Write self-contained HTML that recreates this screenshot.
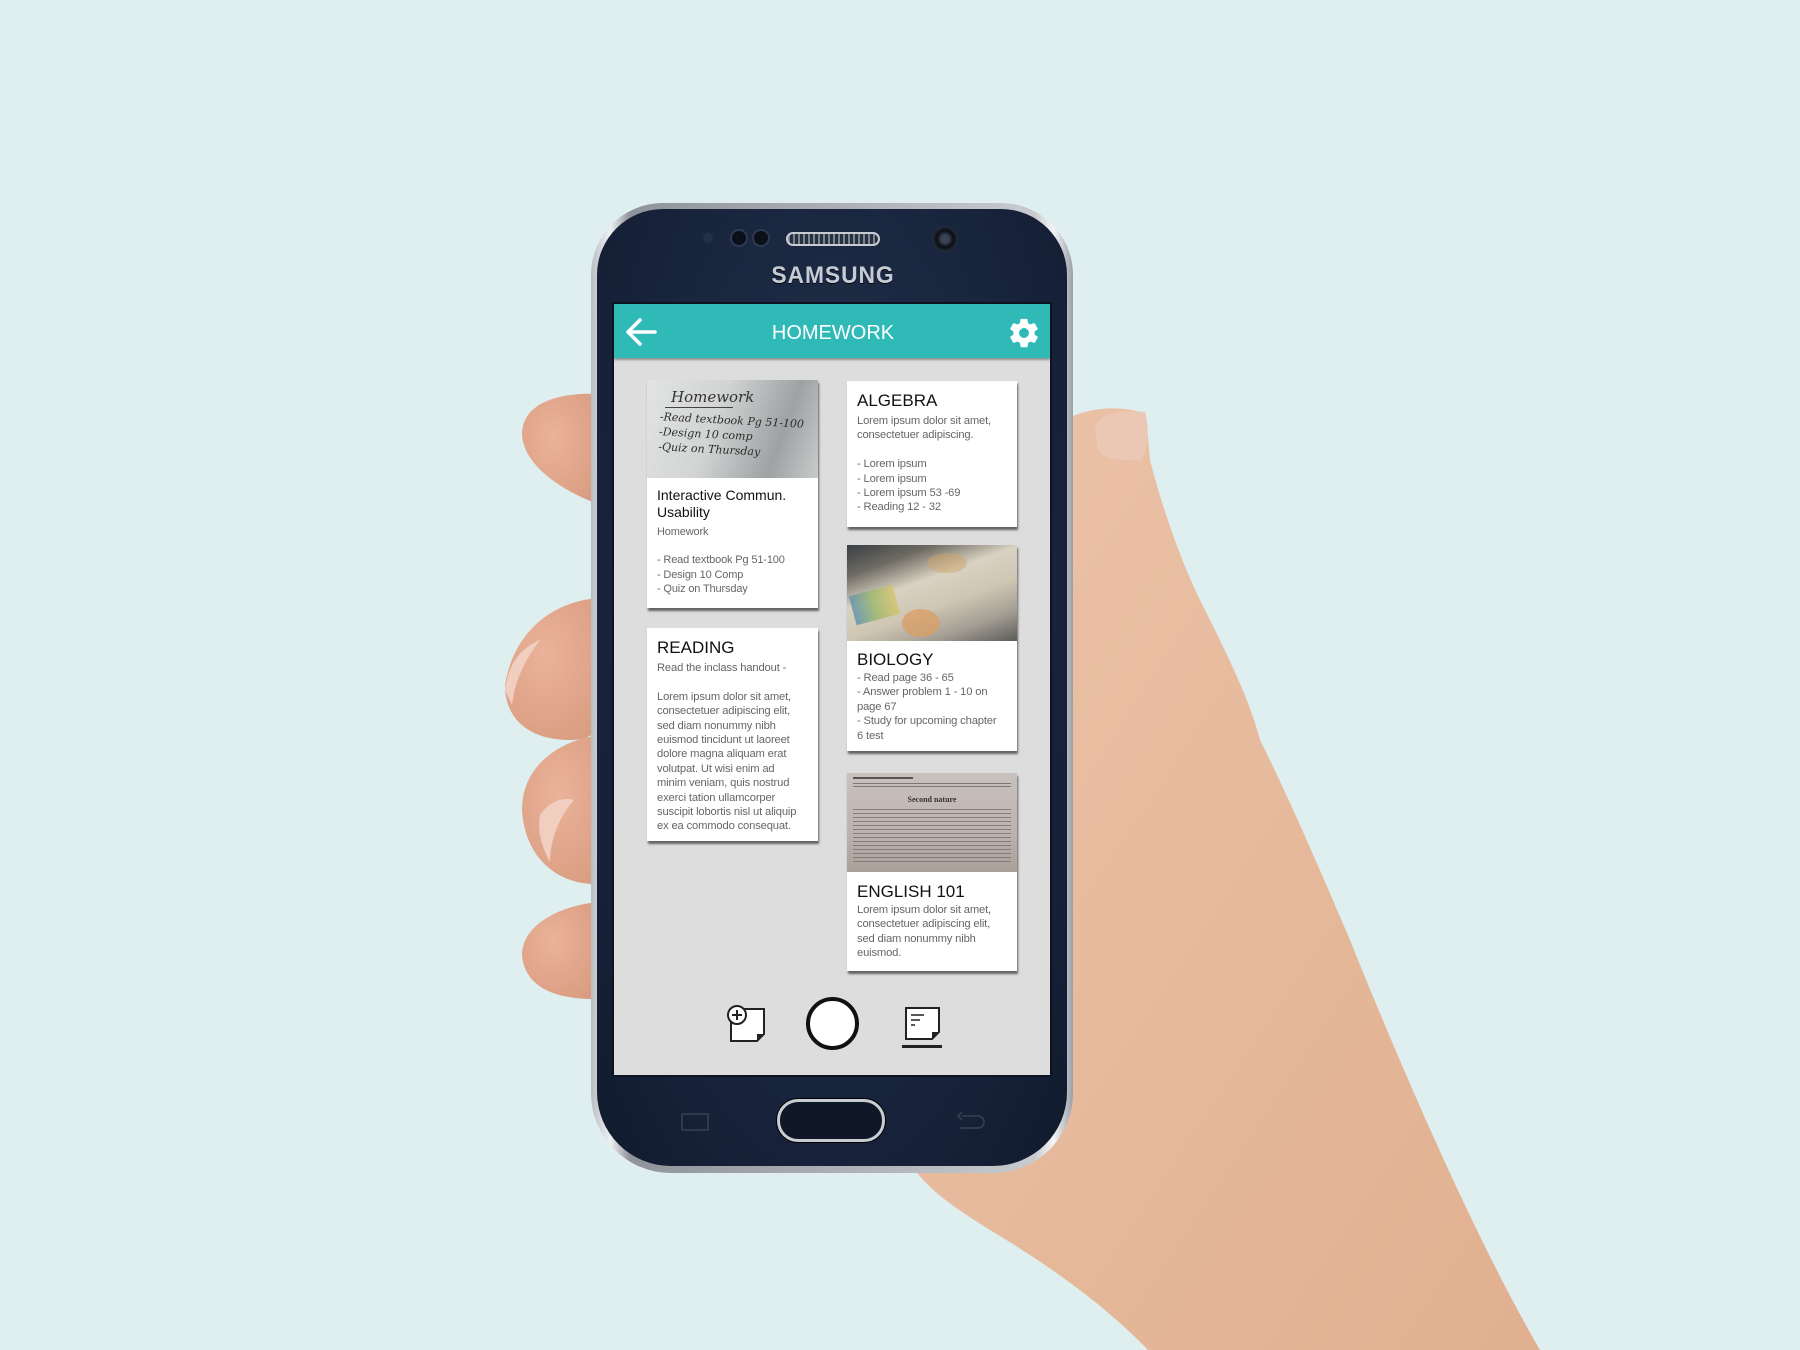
<!DOCTYPE html>
<html><head><meta charset="utf-8"><style>
*{margin:0;padding:0;box-sizing:border-box}
body{width:1800px;height:1350px;overflow:hidden;background:#dfeeef;position:relative;font-family:"Liberation Sans",sans-serif}
.abs{position:absolute}
.card{position:absolute;background:#fff;box-shadow:1px 3px 2px rgba(0,0,0,.55);overflow:hidden}
.card .in{padding:10px 9px 0 10px}
.t{font-size:17px;color:#111;line-height:20px}
.b{font-size:11.2px;color:#666;line-height:14.4px;letter-spacing:-0.15px;white-space:nowrap}
.img{position:relative;overflow:hidden}
</style></head><body>
<svg class="abs" style="left:0;top:0" width="1800" height="1350">
 <defs>
  <linearGradient id="sk" x1="0" y1="0" x2="1" y2="1"><stop offset="0" stop-color="#ecc3a8"/><stop offset="1" stop-color="#e0b090"/></linearGradient>
  <radialGradient id="fg" cx="0.4" cy="0.4" r="0.7"><stop offset="0" stop-color="#eab39a"/><stop offset="1" stop-color="#d99c80"/></radialGradient>
 </defs>
 <path d="M1060,425 C1080,405 1130,405 1146,415 L1150,460 C1160,500 1180,560 1200,600 C1225,650 1250,700 1260,740 C1290,800 1320,870 1350,940 C1390,1040 1470,1230 1540,1350 L1148,1350 C1100,1300 1040,1260 990,1230 C950,1205 930,1190 915,1170 Z" fill="url(#sk)"/>
 <path d="M1095,430 C1095,415 1115,410 1145,412 C1150,430 1148,455 1140,460 C1120,462 1100,458 1098,448 Z" fill="#ebc8b6"/>
 <path d="M600,394 C560,392 522,402 522,435 C524,465 560,490 600,505 Z" fill="url(#fg)"/>
 <path d="M600,598 C560,600 515,625 505,685 C505,720 530,740 570,740 C600,740 608,720 608,690 Z" fill="url(#fg)"/>
 <path d="M505,690 C508,665 520,648 540,640 C525,660 515,680 512,705 Z" fill="#f1cfc0"/>
 <path d="M600,735 C560,740 522,765 522,810 C525,860 560,886 600,884 C615,870 620,820 600,735 Z" fill="url(#fg)"/>
 <path d="M540,815 C550,800 565,797 574,800 C560,815 550,840 550,862 C542,848 537,830 540,815 Z" fill="#f1cfc0"/>
 <path d="M600,902 C560,905 522,925 522,955 C525,990 560,1000 600,999 Z" fill="url(#fg)"/>
</svg>

<div class="abs" style="left:591px;top:203px;width:482px;height:970px;border-radius:72px 72px 80px 80px;background:linear-gradient(90deg,#b9bcc2,#eef0f2 4%,#8f939a 8%,#c7cace 92%,#f4f5f6 96%,#9aa0a8);"></div>
<div class="abs" style="left:597px;top:209px;width:470px;height:957px;border-radius:66px 66px 74px 74px;background:radial-gradient(ellipse at 50% 40%,#22324c,#17223a 70%,#111a2c);"></div>
<div class="abs" style="left:703px;top:233px;width:10px;height:10px;border-radius:50%;background:#233048"></div>
<div class="abs" style="left:732px;top:231px;width:14px;height:14px;border-radius:50%;background:#0b0f18;box-shadow:0 0 0 2px #2d3a52"></div>
<div class="abs" style="left:754px;top:231px;width:14px;height:14px;border-radius:50%;background:#0b0f18;box-shadow:0 0 0 2px #2d3a52"></div>
<div class="abs" style="left:786px;top:232px;width:94px;height:14px;border-radius:8px;background:repeating-linear-gradient(90deg,#7c8594 0 2px,#28303f 2px 5px);border:2px solid #c9cdd3"></div>
<div class="abs" style="left:932px;top:226px;width:26px;height:26px;border-radius:50%;background:radial-gradient(circle,#3a4455 20%,#0a0d14 45%,#262e3c 70%,#4a5262);"></div>
<div class="abs" style="left:733px;top:262px;width:200px;text-align:center;font-size:24px;font-weight:bold;letter-spacing:1px;color:#c6ccd6;text-shadow:0 1px 0 #000;transform:scaleX(0.95)">SAMSUNG</div>

<div class="abs" style="left:614px;top:304px;width:436px;height:771px;background:#dddddd;box-shadow:0 0 0 2px #0d1320"></div>
<div class="abs" style="left:614px;top:304px;width:436px;height:54px;background:#2fbab7;box-shadow:0 2px 2px rgba(0,0,0,.35)"></div>
<svg class="abs" style="left:624px;top:316px" width="36" height="32" viewBox="0 0 36 32"><path d="M31,16 H5 M16,4 L4,16 L16,28" stroke="#fff" stroke-width="3.5" fill="none" stroke-linecap="round" stroke-linejoin="round"/></svg>
<div class="abs" style="left:713px;top:322px;width:240px;text-align:center;color:#fff;font-size:20px">HOMEWORK</div>
<svg class="abs" style="left:1007px;top:316px" width="34" height="34" viewBox="0 0 24 24"><path fill="#fff" d="M19.4 13c.04-.3.06-.65.06-1s-.02-.7-.07-1l2.1-1.650c.2-.15.24-.42.12-.64l-2-3.46c-.12-.22-.4-.3-.6-.22l-2.5 1c-.52-.4-1.08-.73-1.7-.98l-.37-2.65A.5.5 0 0 0 14 2h-4a.5.5 0 0 0-.5.42l-.37 2.65c-.6.25-1.17.58-1.7.98l-2.5-1a.5.5 0 0 0-.6.22l-2 3.46c-.13.22-.07.5.12.64L4.57 11c-.04.3-.07.66-.07 1s.03.7.07 1l-2.1 1.65c-.2.15-.25.42-.12.64l2 3.46c.12.22.4.3.6.22l2.5-1c.52.4 1.08.73 1.7.98l.37 2.65c.04.24.25.42.5.42h4c.25 0 .46-.18.5-.42l.37-2.65c.6-.25 1.17-.57 1.7-.98l2.5 1c.23.08.48 0 .6-.22l2-3.46c.13-.22.07-.5-.12-.64L19.4 13zM12 15.5A3.5 3.5 0 1 1 12 8.5a3.5 3.5 0 0 1 0 7z"/></svg>

<div class="card" style="left:647px;top:380px;width:171px;height:228px">
 <div class="img" style="height:98px;background:linear-gradient(110deg,#e2e3e3 0%,#d2d4d4 40%,#9ea2a3 75%,#c9cbcb 100%)">
  <div class="abs" style="left:24px;top:8px;font-family:'DejaVu Serif',serif;font-style:italic;font-size:15px;color:#333">Homework</div>
  <div class="abs" style="left:18px;top:27px;width:68px;height:1px;background:#444"></div>
  <div class="abs" style="left:12px;top:33px;font-family:'DejaVu Serif',serif;font-style:italic;font-size:11px;line-height:15px;color:#2b2b2b;transform:rotate(3deg)">-Read textbook Pg 51-100<br>-Design 10 comp<br>-Quiz on Thursday</div>
 </div>
 <div class="in" style="padding-top:9px">
  <div class="t" style="font-size:14px;line-height:17px">Interactive Commun.<br>Usability</div>
  <div class="b" style="margin-top:4px;font-size:11px">Homework</div>
  <div class="b" style="margin-top:14px;font-size:11px">- Read textbook Pg 51-100<br>- Design 10 Comp<br>- Quiz on Thursday</div>
 </div>
</div>

<div class="card" style="left:847px;top:381px;width:170px;height:146px">
 <div class="in"><div class="t">ALGEBRA</div>
 <div class="b" style="margin-top:3px">Lorem ipsum dolor sit amet,<br>consectetuer adipiscing.<br><br>- Lorem ipsum<br>- Lorem ipsum<br>- Lorem ipsum 53 -69<br>- Reading 12 - 32</div></div>
</div>

<div class="card" style="left:847px;top:545px;width:170px;height:206px">
 <div class="img" style="height:96px;background:linear-gradient(160deg,#3a3f42 0%,#6d6a62 20%,#d9d2c2 40%,#cfc6b3 60%,#a39e94 80%,#5c5b58 100%)">
  <div class="abs" style="left:5px;top:45px;width:45px;height:30px;background:linear-gradient(90deg,#5a8fb0,#9bb86a,#d7c46c);transform:rotate(-15deg);opacity:.8"></div>
  <div class="abs" style="left:55px;top:64px;width:38px;height:28px;border-radius:50%;background:#d8a066;opacity:.8"></div>
  <div class="abs" style="left:80px;top:8px;width:40px;height:20px;border-radius:50%;background:#cda36a;opacity:.5"></div>
 </div>
 <div class="in" style="padding-top:9px"><div class="t">BIOLOGY</div>
 <div class="b" style="margin-top:1px">- Read page 36 - 65<br>- Answer problem 1 - 10 on<br>page 67<br>- Study for upcoming chapter<br>6 test</div></div>
</div>

<div class="card" style="left:647px;top:628px;width:171px;height:213px">
 <div class="in"><div class="t">READING</div>
 <div class="b" style="margin-top:3px">Read the inclass handout -<br><br>Lorem ipsum dolor sit amet,<br>consectetuer adipiscing elit,<br>sed diam nonummy nibh<br>euismod tincidunt ut laoreet<br>dolore magna aliquam erat<br>volutpat. Ut wisi enim ad<br>minim veniam, quis nostrud<br>exerci tation ullamcorper<br>suscipit lobortis nisl ut aliquip<br>ex ea commodo consequat.</div></div>
</div>

<div class="card" style="left:847px;top:773px;width:170px;height:198px">
 <div class="img" style="height:99px;background:linear-gradient(180deg,#c9c1bd,#bdb3ae 60%,#a9a09a)">
  <div class="abs" style="left:0;top:22px;width:170px;text-align:center;font-family:'Liberation Serif',serif;font-weight:bold;font-size:8px;color:#333">Second nature</div>
  <div class="abs" style="left:6px;top:36px;width:158px;height:55px;background:repeating-linear-gradient(180deg,#6e6765 0 1px,transparent 1px 4px);opacity:.7"></div>
  <div class="abs" style="left:6px;top:4px;width:60px;height:2px;background:#555"></div>
  <div class="abs" style="left:6px;top:10px;width:158px;height:6px;background:repeating-linear-gradient(180deg,#777 0 1px,transparent 1px 3px)"></div>
 </div>
 <div class="in" style="padding-top:10px"><div class="t">ENGLISH 101</div>
 <div class="b" style="margin-top:1px">Lorem ipsum dolor sit amet,<br>consectetuer adipiscing elit,<br>sed diam nonummy nibh<br>euismod.</div></div>
</div>

<svg class="abs" style="left:720px;top:997px" width="50" height="50" viewBox="0 0 50 50">
 <path d="M11,12 H44 V37 L37,44 H11 Z" fill="#fff" stroke="#222" stroke-width="2"/>
 <path d="M37,44 V37 H44 Z" fill="#222"/>
 <circle cx="17" cy="18" r="9" fill="#fff" stroke="#222" stroke-width="2"/>
 <path d="M17,13 V23 M12,18 H22" stroke="#222" stroke-width="2"/>
</svg>
<div class="abs" style="left:806px;top:997px;width:53px;height:53px;border-radius:50%;border:4px solid #111;background:#fff"></div>
<svg class="abs" style="left:898px;top:996px" width="50" height="56" viewBox="0 0 50 56">
 <path d="M8,12 H41 V36 L34,43 H8 Z" fill="#fff" stroke="#222" stroke-width="2"/>
 <path d="M34,43 V36 H41 Z" fill="#222"/>
 <path d="M13,19 H26 M13,24 H22 M13,29 H17" stroke="#222" stroke-width="1.6"/>
 <rect x="4" y="49" width="40" height="3" fill="#222"/>
</svg>

<div class="abs" style="left:681px;top:1113px;width:28px;height:18px;border:2px solid #2e3a4e;border-radius:2px"></div>
<div class="abs" style="left:777px;top:1099px;width:108px;height:43px;border-radius:21px;border:3px solid #c8ccd3;background:#101828;box-shadow:0 0 0 1px #000"></div>
<svg class="abs" style="left:954px;top:1110px" width="34" height="22" viewBox="0 0 34 22"><path d="M8,6 H24 A6,6 0 0 1 24,18 H6 M8,2 L4,6 L8,10" stroke="#2e3a4e" stroke-width="2" fill="none"/></svg>
</body></html>
